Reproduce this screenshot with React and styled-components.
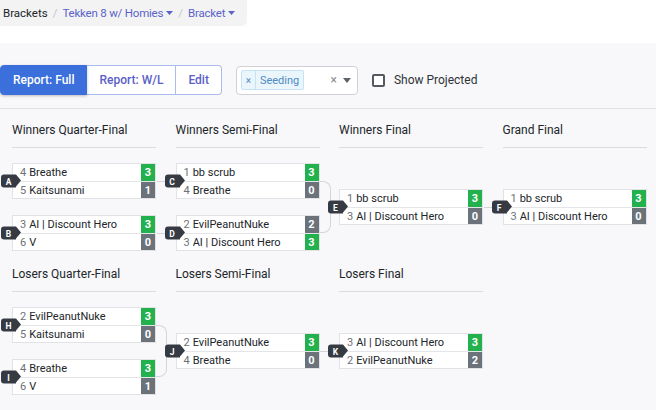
import React from "react";
import styled, { createGlobalStyle } from "styled-components";

const GlobalStyle = createGlobalStyle`
  html, body {
    margin: 0;
    padding: 0;
    background: #ffffff;
    font-family: Roboto, "Liberation Sans", Arial, sans-serif;
    color: #212529;
  }
  * { box-sizing: border-box; }
`;

const LINE = "#d3d5da";

const Crumbs = styled.nav`
  display: inline-flex;
  align-items: center;
  height: 26px;
  padding: 0 12px 0 3px;
  background: #f3f3f4;
  border-bottom-right-radius: 5px;
  font-size: 11.5px;
  gap: 5px;
`;

const Crumb = styled.span`
  color: ${(p) => (p.$link ? "#5a63c9" : "#212529")};
  letter-spacing: ${(p) => (p.$link ? "-0.2px" : "0")};
  display: inline-flex;
  align-items: center;
  gap: 3px;
`;

const Slash = styled.span`
  color: #c4c6cb;
`;

const Caret = () => (
  <svg width="7" height="4" viewBox="0 0 7 4">
    <path d="M0 0h7L3.5 4z" fill="currentColor" />
  </svg>
);

const Main = styled.main`
  margin-top: 17px;
  background: #f8f8fa;
  min-height: 367px;
`;

const Toolbar = styled.div`
  display: flex;
  align-items: center;
  padding: 22px 0 13px 0;
  border-bottom: 1px solid #dfe0e4;
`;

const ButtonGroup = styled.div`
  display: flex;
  height: 30px;
`;

const ModeButton = styled.button`
  font-family: inherit;
  font-size: 12px;
  font-weight: 500;
  padding: 0 12px;
  height: 30px;
  border: 1px solid ${(p) => (p.$active ? "#3a6fdc" : "#a9bcef")};
  border-left-width: ${(p) => (p.$first ? 1 : 0)}px;
  background: ${(p) => (p.$active ? "#3a6fdc" : "#ffffff")};
  color: ${(p) => (p.$active ? "#ffffff" : "#5a61c7")};
  box-shadow: ${(p) => (p.$active ? "0 1px 3px rgba(0,0,0,0.25)" : "none")};
  position: relative;
  z-index: ${(p) => (p.$active ? 1 : 0)};
  &:first-child {
    border-radius: 4px 0 0 4px;
  }
  &:last-child {
    border-radius: 0 4px 4px 0;
  }
`;

const Select = styled.div`
  margin-left: 14px;
  width: 122px;
  height: 29px;
  background: #fff;
  border: 1px solid #cfd1d6;
  border-radius: 4px;
  display: flex;
  align-items: center;
  padding: 0 6px 0 4px;
`;

const Tag = styled.div`
  display: flex;
  align-items: center;
  height: 20px;
  background: #ebf5fc;
  border: 1px solid #c6e2f6;
  border-radius: 2px;
  font-size: 11px;
  color: #4b8cc4;
`;

const TagRemove = styled.span`
  width: 14px;
  height: 100%;
  display: flex;
  align-items: center;
  justify-content: center;
  border-right: 1px solid #c6e2f6;
  font-size: 10px;
`;

const TagLabel = styled.span`
  padding: 0 4px 0 4px;
`;

const SelectControls = styled.div`
  margin-left: auto;
  display: flex;
  align-items: center;
  gap: 6px;
  color: #8a8d93;
  font-size: 12px;
`;

const CheckLabel = styled.label`
  margin-left: 14px;
  display: flex;
  align-items: center;
  gap: 9px;
  font-size: 12px;
  color: #2f3338;
`;

const CheckBox = styled.span`
  width: 13px;
  height: 13px;
  border: 2px solid #555a60;
  border-radius: 2px;
  background: #fff;
`;

const Bracket = styled.div`
  padding: 13px 0 0 12px;
  display: flex;
  flex-direction: column;
  gap: 15px;
`;

const Section = styled.div`
  display: flex;
  gap: 19.5px;
`;

const Column = styled.div`
  width: 144px;
  display: flex;
  flex-direction: column;
`;

const RoundTitle = styled.div`
  font-size: 12px;
  line-height: 16px;
  padding-bottom: 9px;
  border-bottom: 1px solid #d9dbe0;
  margin-bottom: 15px;
  white-space: nowrap;
`;

const Matches = styled.div`
  flex: 1;
  display: flex;
  flex-direction: column;
  justify-content: center;
  gap: 16px;
`;

const Pair = styled.div`
  position: relative;
  display: flex;
  flex-direction: column;
  gap: 16px;

  &::after {
    content: "";
    position: absolute;
    left: 100%;
    top: 18px;
    bottom: 18px;
    width: 10px;
    border: 1px solid ${LINE};
    border-left: none;
    border-radius: 0 8px 8px 0;
  }
`;

const MatchBox = styled.div`
  position: relative;
  background: #fff;
  border: 1px solid #e0e2e6;

  &::before {
    content: "";
    display: ${(p) => (p.$feed ? "block" : "none")};
    position: absolute;
    right: 100%;
    top: 50%;
    width: 20px;
    border-top: 1px solid ${LINE};
  }
`;

const Badge = styled.span`
  position: absolute;
  left: -12px;
  top: 50%;
  transform: translateY(-50%);
  width: 15px;
  height: 13px;
  background: #363b43;
  border-radius: 3px 0 0 3px;
  color: #fff;
  font-size: 8.5px;
  font-weight: 700;
  display: flex;
  align-items: center;
  justify-content: center;
  z-index: 2;

  &::after {
    content: "";
    position: absolute;
    left: 100%;
    top: 0;
    border-style: solid;
    border-width: 6.5px 0 6.5px 5px;
    border-color: transparent transparent transparent #363b43;
  }
`;

const Slot = styled.div`
  display: flex;
  align-items: center;
  height: 17px;
  font-size: 11px;
  padding-left: 7px;
  & + & {
    border-top: 1px solid #e4e5e9;
  }
`;

const Seed = styled.span`
  color: #6c7178;
  margin-right: 3px;
`;

const Name = styled.span`
  flex: 1;
  color: #212529;
  white-space: nowrap;
  overflow: hidden;
`;

const Score = styled.span`
  width: 14px;
  height: 100%;
  display: flex;
  align-items: center;
  justify-content: center;
  color: #fff;
  font-weight: 700;
  font-size: 11px;
  background: ${(p) => (p.$win ? "#22b14c" : "#6b727a")};
`;

function Match({ id, feed, slots }) {
  return (
    <MatchBox $feed={feed}>
      <Badge>{id}</Badge>
      {slots.map(([seed, name, score], i) => (
        <Slot key={i}>
          <Seed>{seed}</Seed>
          <Name>{name}</Name>
          <Score $win={score === 3}>{score}</Score>
        </Slot>
      ))}
    </MatchBox>
  );
}

const winners = [
  {
    title: "Winners Quarter-Final",
    matches: [
      { id: "A", slots: [[4, "Breathe", 3], [5, "Kaitsunami", 1]] },
      { id: "B", slots: [[3, "AI | Discount Hero", 3], [6, "V", 0]] },
    ],
  },
  {
    title: "Winners Semi-Final",
    pair: true,
    matches: [
      { id: "C", feed: true, slots: [[1, "bb scrub", 3], [4, "Breathe", 0]] },
      { id: "D", feed: true, slots: [[2, "EvilPeanutNuke", 2], [3, "AI | Discount Hero", 3]] },
    ],
  },
  {
    title: "Winners Final",
    matches: [{ id: "E", slots: [[1, "bb scrub", 3], [3, "AI | Discount Hero", 0]] }],
  },
  {
    title: "Grand Final",
    matches: [{ id: "F", feed: true, slots: [[1, "bb scrub", 3], [3, "AI | Discount Hero", 0]] }],
  },
];

const losers = [
  {
    title: "Losers Quarter-Final",
    pair: true,
    matches: [
      { id: "H", slots: [[2, "EvilPeanutNuke", 3], [5, "Kaitsunami", 0]] },
      { id: "I", slots: [[4, "Breathe", 3], [6, "V", 1]] },
    ],
  },
  {
    title: "Losers Semi-Final",
    matches: [{ id: "J", slots: [[2, "EvilPeanutNuke", 3], [4, "Breathe", 0]] }],
  },
  {
    title: "Losers Final",
    matches: [{ id: "K", feed: true, slots: [[3, "AI | Discount Hero", 3], [2, "EvilPeanutNuke", 2]] }],
  },
];

function Round({ round }) {
  const list = round.matches.map((m) => <Match key={m.id} {...m} />);
  return (
    <Column>
      <RoundTitle>{round.title}</RoundTitle>
      <Matches>{round.pair ? <Pair>{list}</Pair> : list}</Matches>
    </Column>
  );
}

export default function App() {
  return (
    <>
      <GlobalStyle />
      <Crumbs>
        <Crumb>Brackets</Crumb>
        <Slash>/</Slash>
        <Crumb $link>
          Tekken 8 w/ Homies <Caret />
        </Crumb>
        <Slash>/</Slash>
        <Crumb $link>
          Bracket <Caret />
        </Crumb>
      </Crumbs>
      <Main>
        <Toolbar>
          <ButtonGroup>
            <ModeButton $active $first>Report: Full</ModeButton>
            <ModeButton>Report: W/L</ModeButton>
            <ModeButton>Edit</ModeButton>
          </ButtonGroup>
          <Select>
            <Tag>
              <TagRemove>×</TagRemove>
              <TagLabel>Seeding</TagLabel>
            </Tag>
            <SelectControls>
              <span>×</span>
              <svg width="8" height="5" viewBox="0 0 8 5">
                <path d="M0 0h8L4 5z" fill="#5f6369" />
              </svg>
            </SelectControls>
          </Select>
          <CheckLabel>
            <CheckBox />
            Show Projected
          </CheckLabel>
        </Toolbar>
        <Bracket>
          <Section>
            {winners.map((r) => (
              <Round key={r.title} round={r} />
            ))}
          </Section>
          <Section>
            {losers.map((r) => (
              <Round key={r.title} round={r} />
            ))}
          </Section>
        </Bracket>
      </Main>
    </>
  );
}
